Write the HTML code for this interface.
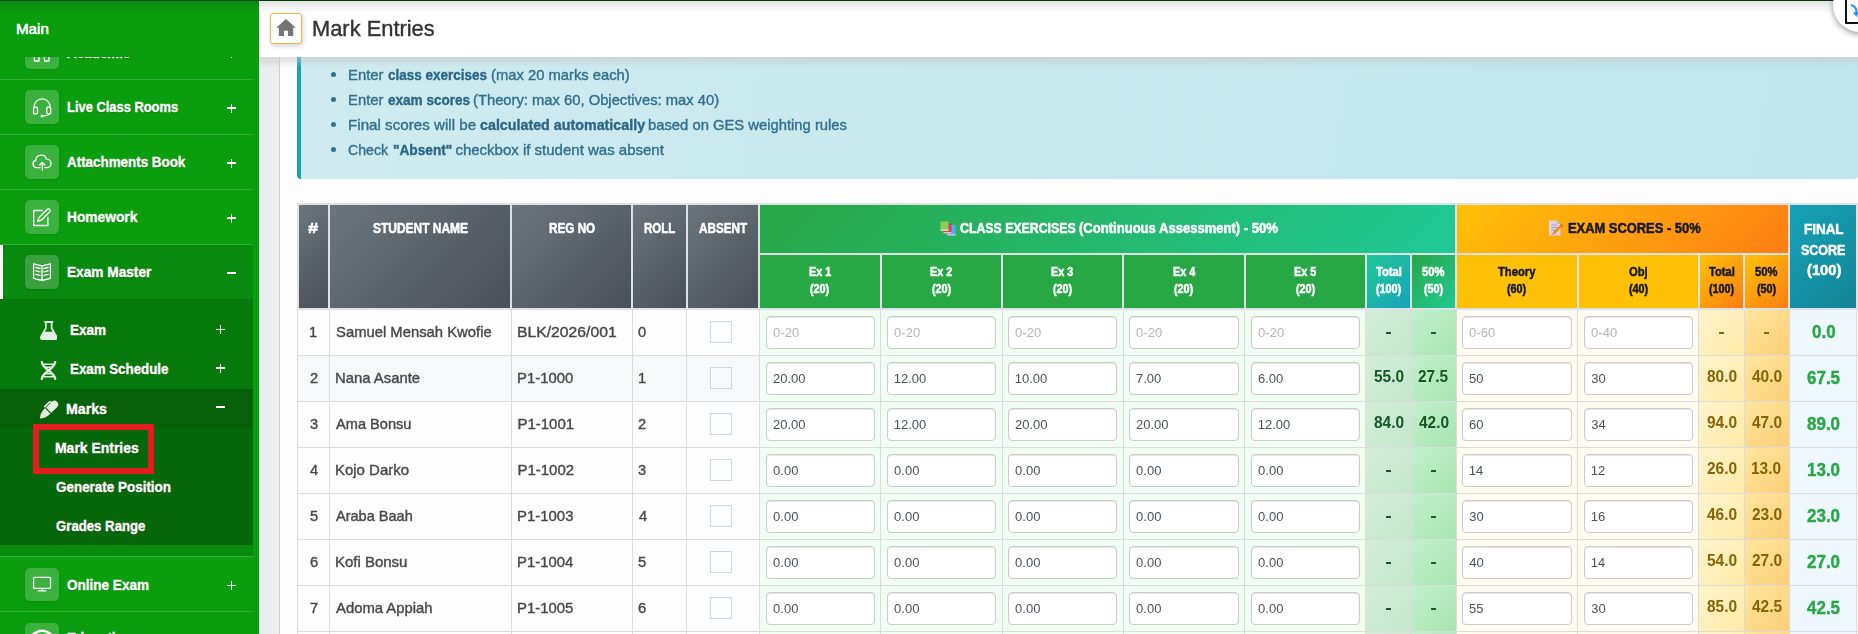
<!DOCTYPE html>
<html lang="en"><head><meta charset="utf-8"><title>Mark Entries</title><style>
*{box-sizing:border-box;margin:0;padding:0}
html,body{width:1858px;height:634px;overflow:hidden;background:#ebedf1;font-family:"Liberation Sans",sans-serif}
body{position:relative}
.abs,.t,.b{position:absolute}
.t{white-space:nowrap;line-height:1;transform-origin:0 0;-webkit-text-stroke:.38px}
.ns{-webkit-text-stroke:0}
.hd{-webkit-text-stroke:.5px}
#main{left:0;top:0;width:1858px;height:634px;overflow:hidden;will-change:transform}
#side{left:0;top:0;width:259px;height:634px;background:#0a9e0e;overflow:hidden}
#side .div{left:0;width:253px;height:1px;background:rgba(255,255,255,.17)}
.ib{left:25px;width:34px;height:34px;border-radius:5px;background:rgba(255,255,255,.2);box-shadow:0 1px 3px rgba(0,0,0,.12)}
.ib svg{position:absolute;left:0;top:0;width:34px;height:34px;fill:none;stroke:#fff;stroke-width:1.3;stroke-linecap:round;stroke-linejoin:round}
.inp{height:33px;background:#fff;border:1px solid #cbcbcb;border-radius:4px;box-shadow:inset 0 1px 1px rgba(0,0,0,.1)}
.cb{width:22px;height:22px;border:1px solid #cbd8db}
.sh{text-shadow:0 1px 1px rgba(0,0,0,.35)}
</style></head><body>
<div id="side" class="abs">
<div class="b" style="left:0;top:245px;width:253px;height:311px;background:#088a0e"></div>
<div class="b" style="left:0;top:245px;width:3px;height:54px;background:#fff"></div>
<div class="b" style="left:0;top:299px;width:253px;height:246px;background:#07790c"></div>
<div class="b" style="left:0;top:389px;width:253px;height:39px;background:#06600a"></div>
<div class="b" style="left:0;top:428px;width:253px;height:117px;background:#07670b"></div>
<div class="b div" style="top:79px"></div>
<div class="b div" style="top:134px"></div>
<div class="b div" style="top:189px"></div>
<div class="b div" style="top:244px"></div>
<div class="b div" style="top:556px"></div>
<div class="b div" style="top:611px"></div>
<div class="b ib" style="top:35px;height:34px"><svg viewBox="0 0 34 34"><rect x="9.4" y="16" width="4.6" height="10"/><rect x="19.4" y="16" width="4.6" height="10"/></svg></div>
<span class="t sh" style="left:67.3px;top:45.1px;font-size:15.5px;font-weight:700;color:#fff;transform:scaleX(0.862);">Academic</span>
<div class="b" style="left:227px;top:52.4px;width:9px;height:1.6px;background:#fff"></div>
<div class="b" style="left:230.7px;top:48.7px;width:1.6px;height:9px;background:#fff"></div>
<div class="b ib" style="top:90px;height:34px"><svg viewBox="0 0 34 34"><path d="M9.2 17.5v-.8a7.9 7.9 0 0 1 15.8 0v.8"/><rect x="8.6" y="17.2" width="3.9" height="6.6" rx="1"/><rect x="21.8" y="17.2" width="3.9" height="6.6" rx="1"/><path d="M24.3 23.9q-.6 1.9-6.5 2.1"/><circle cx="17" cy="26" r=".9" fill="#fff"/></svg></div>
<span class="t sh" style="left:66.8px;top:99.3px;font-size:15.5px;font-weight:700;color:#fff;transform:scaleX(0.832);">Live Class Rooms</span>
<div class="b" style="left:227px;top:107.4px;width:9px;height:1.6px;background:#fff"></div>
<div class="b" style="left:230.7px;top:103.7px;width:1.6px;height:9px;background:#fff"></div>
<div class="b ib" style="top:145px;height:34px"><svg viewBox="0 0 34 34"><path d="M15 22.6h-3.3a3.6 3.6 0 0 1-.9-7.1 5.4 5.4 0 0 1 10.6-1.4 4.3 4.3 0 0 1 1.2 8.5h-3"/><path d="M17.3 25v-7.3M14.7 20l2.6-2.6 2.6 2.6"/></svg></div>
<span class="t sh" style="left:67.3px;top:154.3px;font-size:15.5px;font-weight:700;color:#fff;transform:scaleX(0.864);">Attachments Book</span>
<div class="b" style="left:227px;top:162.4px;width:9px;height:1.6px;background:#fff"></div>
<div class="b" style="left:230.7px;top:158.7px;width:1.6px;height:9px;background:#fff"></div>
<div class="b ib" style="top:200px;height:34px"><svg viewBox="0 0 34 34"><path d="M17.5 10.5H8.7v15h14.2v-8"/><path d="M12.8 21.3l1-3.5 8.5-8.5a1.7 1.7 0 0 1 2.4 2.4l-8.5 8.5z"/></svg></div>
<span class="t sh" style="left:66.7px;top:209.3px;font-size:15.5px;font-weight:700;color:#fff;transform:scaleX(0.888);">Homework</span>
<div class="b" style="left:227px;top:217.4px;width:9px;height:1.6px;background:#fff"></div>
<div class="b" style="left:230.7px;top:213.7px;width:1.6px;height:9px;background:#fff"></div>
<div class="b ib" style="top:255px;height:34px"><svg viewBox="0 0 34 34"><path d="M8.6 8.9l8.4 2 8.4-2v14.4l-8.4 2.2-8.4-2.2zM17 10.9v14.6"/><path d="M10.9 12.5l4.1 1M10.9 15.9l4.1 1M10.9 19.3l4.1 1M23.1 12.5l-4.1 1M23.1 15.9l-4.1 1M23.1 19.3l-4.1 1"/></svg></div>
<span class="t sh" style="left:66.7px;top:264.3px;font-size:15.5px;font-weight:700;color:#fff;transform:scaleX(0.882);">Exam Master</span>
<div class="b" style="left:227px;top:272.4px;width:9px;height:1.6px;background:#fff"></div>
<div class="b ib" style="top:567.5px;height:33px"><svg viewBox="0 0 34 34"><rect x="8.6" y="9.3" width="16.9" height="11" rx="1"/><path d="M17 20.3v2.3M13.2 22.8h7.6"/></svg></div>
<span class="t sh" style="left:67.1px;top:577.3px;font-size:15.5px;font-weight:700;color:#fff;transform:scaleX(0.873);">Online Exam</span>
<div class="b" style="left:227px;top:584.9px;width:9px;height:1.6px;background:#fff"></div>
<div class="b" style="left:230.7px;top:581.2px;width:1.6px;height:9px;background:#fff"></div>
<div class="b ib" style="top:623px;height:34px"><svg viewBox="0 0 34 34"><path d="M7.5 12Q17 3.5 26.5 12" stroke-width="2.6"/></svg></div>
<span class="t sh" style="left:66.7px;top:630.3px;font-size:15.5px;font-weight:700;color:#fff;transform:scaleX(0.868);">Education</span>
<svg class="b" style="left:39.5px;top:321px;width:17.5px;height:18.5px" viewBox="0 0 17 18"><rect x="4" y="0" width="9" height="1.9" rx=".6" fill="#e2efe2" stroke="none"/><path d="M5.7 1.8V7L1 15.2a1.7 1.7 0 0 0 1.5 2.6h12a1.7 1.7 0 0 0 1.5-2.6L11.3 7V1.8" fill="none" stroke="#e2efe2" stroke-width="1.7"/><path d="M3.8 10.5h9.4l2.6 5.2a1.2 1.2 0 0 1-1.1 1.7H2.3a1.2 1.2 0 0 1-1.1-1.7z" fill="#e2efe2" stroke="none"/></svg>
<svg class="b" style="left:39.8px;top:360.6px;width:17px;height:19px" viewBox="0 0 17 19"><g fill="none" stroke="#e2efe2" stroke-width="2.3" stroke-linecap="round"><path d="M1.8 1C1.8 7.5 15.2 11.5 15.2 18"/><path d="M15.2 1C15.2 7.5 1.8 11.5 1.8 18"/></g><g stroke="#e2efe2" stroke-width="1.4"><path d="M3 3.2h11M5.5 6.2h6M5.5 12.8h6M3 15.8h11"/></g></svg>
<svg class="b" style="left:38.5px;top:400px;width:20px;height:19px" viewBox="0 0 20 19"><path d="M12.9 1.8A3.75 3.75 0 0 1 18.1 7.2L9.6 15.2Q5 18.5 1.3 18.5Q.8 18.5.9 18Q1.2 13.5 4.4 9.8Z" fill="#e2efe2" stroke="none"/><path d="M6.6 7.9l5.2 5.5" stroke="#06600a" stroke-width="1.2"/><path d="M5.6 6.6l4.7-4.5a1.3 1.3 0 0 1 1.8 0" fill="none" stroke="#e2efe2" stroke-width="1.5" stroke-linecap="round"/></svg>
<span class="t sh" style="left:69.9px;top:322.2px;font-size:15.5px;font-weight:700;color:#fff;transform:scaleX(0.874);">Exam</span>
<div class="b" style="left:215.8px;top:328.6px;width:9px;height:1.6px;background:#fff"></div>
<div class="b" style="left:219.5px;top:324.9px;width:1.6px;height:9px;background:#fff"></div>
<span class="t sh" style="left:69.9px;top:361.2px;font-size:15.5px;font-weight:700;color:#fff;transform:scaleX(0.859);">Exam Schedule</span>
<div class="b" style="left:215.8px;top:367.4px;width:9px;height:1.6px;background:#fff"></div>
<div class="b" style="left:219.5px;top:363.7px;width:1.6px;height:9px;background:#fff"></div>
<span class="t sh" style="left:66.4px;top:400.5px;font-size:15.5px;font-weight:700;color:#fff;transform:scaleX(0.912);">Marks</span>
<div class="b" style="left:215.8px;top:406.2px;width:9px;height:1.6px;background:#fff"></div>
<span class="t sh" style="left:55.4px;top:440.2px;font-size:15.5px;font-weight:700;color:#fff;transform:scaleX(0.900);">Mark Entries</span>
<span class="t sh" style="left:55.8px;top:479.2px;font-size:15.5px;font-weight:700;color:#fff;transform:scaleX(0.867);">Generate Position</span>
<span class="t sh" style="left:55.8px;top:518.2px;font-size:15.5px;font-weight:700;color:#fff;transform:scaleX(0.851);">Grades Range</span>
<div class="b" style="left:33px;top:424px;width:121px;height:50px;border:6px solid #e31c1f"></div>
<div class="b" style="left:0;top:0;width:259px;height:57px;background:linear-gradient(#0a8b11 0,#0a8b11 1px,#0a9e0e 14px)"></div>
<span class="t" style="left:16.2px;top:21.9px;font-size:14.5px;color:#fff;transform:scaleX(1.044);text-shadow:0 0 .5px #fff;">Main</span>
</div>
<div id="main" class="abs">
<div class="abs" style="left:279px;top:57px;width:1600px;height:600px;background:#fdfdfd;border-left:1px solid #cfd0d3"></div>
<div class="abs" style="left:297px;top:40px;width:1561px;height:139px;background:linear-gradient(100deg,#cfebf0,#bfe5eb);border-left:4px solid #17a2b8;border-radius:4px"></div>
<div class="b" style="left:331px;top:71.9px;width:5px;height:5px;border-radius:50%;background:#31708f"></div>
<div class="b" style="left:331px;top:96.8px;width:5px;height:5px;border-radius:50%;background:#31708f"></div>
<div class="b" style="left:331px;top:121.8px;width:5px;height:5px;border-radius:50%;background:#31708f"></div>
<div class="b" style="left:331px;top:146.8px;width:5px;height:5px;border-radius:50%;background:#31708f"></div>
<span class="t" style="left:348.0px;top:66.9px;font-size:15px;color:#31708f;transform:scaleX(0.988);">Enter</span>
<span class="t" style="left:388.0px;top:66.9px;font-size:15px;font-weight:700;color:#2b6788;transform:scaleX(0.900);">class exercises</span>
<span class="t" style="left:490.6px;top:66.9px;font-size:15px;color:#31708f;transform:scaleX(0.985);">(max 20 marks each)</span>
<span class="t" style="left:348.0px;top:91.8px;font-size:15px;color:#31708f;transform:scaleX(0.988);">Enter</span>
<span class="t" style="left:388.0px;top:91.8px;font-size:15px;font-weight:700;color:#2b6788;transform:scaleX(0.903);">exam scores</span>
<span class="t" style="left:473.3px;top:91.8px;font-size:15px;color:#31708f;transform:scaleX(0.984);">(Theory: max 60, Objectives: max 40)</span>
<span class="t" style="left:348.0px;top:116.8px;font-size:15px;color:#31708f;transform:scaleX(1.011);">Final scores will be</span>
<span class="t" style="left:479.5px;top:116.8px;font-size:15px;font-weight:700;color:#2b6788;transform:scaleX(0.952);">calculated automatically</span>
<span class="t" style="left:648.1px;top:116.8px;font-size:15px;color:#31708f;transform:scaleX(0.986);">based on GES weighting rules</span>
<span class="t" style="left:348.3px;top:141.8px;font-size:15px;color:#31708f;transform:scaleX(0.944);">Check</span>
<span class="t" style="left:392.7px;top:141.8px;font-size:15px;font-weight:700;color:#2b6788;transform:scaleX(0.912);">"Absent"</span>
<span class="t" style="left:455.4px;top:141.8px;font-size:15px;color:#31708f;">checkbox if student was absent</span>
<div class="abs" style="left:297px;top:203px;width:1561px;height:431px;background:#fdfdfd"></div>
<div class="abs" style="left:297px;top:203px;width:1561px;height:107px;background:#dee2e6"></div>
<div class="b" style="left:299px;top:205px;width:29px;height:103px;background:linear-gradient(135deg,#6c757d,#495057)"></div>
<div class="b" style="left:330px;top:205px;width:180px;height:103px;background:linear-gradient(135deg,#6c757d,#495057)"></div>
<div class="b" style="left:512px;top:205px;width:119px;height:103px;background:linear-gradient(135deg,#6c757d,#495057)"></div>
<div class="b" style="left:633px;top:205px;width:53px;height:103px;background:linear-gradient(135deg,#6c757d,#495057)"></div>
<div class="b" style="left:688px;top:205px;width:70px;height:103px;background:linear-gradient(135deg,#6c757d,#495057)"></div>
<div class="b" style="left:760px;top:205px;width:695px;height:48px;background:linear-gradient(135deg,#28a745,#20c997)"></div>
<div class="b" style="left:760px;top:255px;width:120px;height:53px;background:#28a745"></div>
<div class="b" style="left:882px;top:255px;width:119px;height:53px;background:#28a745"></div>
<div class="b" style="left:1003px;top:255px;width:119px;height:53px;background:#28a745"></div>
<div class="b" style="left:1124px;top:255px;width:120px;height:53px;background:#28a745"></div>
<div class="b" style="left:1246px;top:255px;width:119px;height:53px;background:#28a745"></div>
<div class="b" style="left:1367px;top:255px;width:43px;height:53px;background:linear-gradient(135deg,#20c997,#17a2b8)"></div>
<div class="b" style="left:1412px;top:255px;width:43px;height:53px;background:linear-gradient(135deg,#28a745,#20c997)"></div>
<div class="b" style="left:1457px;top:205px;width:331px;height:48px;background:linear-gradient(135deg,#ffc107,#fd7e14)"></div>
<div class="b" style="left:1457px;top:255px;width:120px;height:53px;background:#ffc107"></div>
<div class="b" style="left:1579px;top:255px;width:119px;height:53px;background:#ffc107"></div>
<div class="b" style="left:1700px;top:255px;width:43px;height:53px;background:linear-gradient(135deg,#ffc107,#fd7e14)"></div>
<div class="b" style="left:1745px;top:255px;width:43px;height:53px;background:linear-gradient(135deg,#ffc107,#fd7e14)"></div>
<div class="b" style="left:1790px;top:205px;width:66px;height:103px;background:linear-gradient(135deg,#17a2b8,#138496)"></div>
<span class="t hd" style="left:308.4px;top:220.9px;font-size:14.5px;font-weight:700;color:#fff;transform:scaleX(1.262);">#</span>
<span class="t hd" style="left:372.8px;top:220.9px;font-size:14.5px;font-weight:700;color:#fff;transform:scaleX(0.825);">STUDENT NAME</span>
<span class="t hd" style="left:548.7px;top:220.9px;font-size:14.5px;font-weight:700;color:#fff;transform:scaleX(0.808);">REG NO</span>
<span class="t hd" style="left:643.6px;top:220.9px;font-size:14.5px;font-weight:700;color:#fff;transform:scaleX(0.795);">ROLL</span>
<span class="t hd" style="left:698.9px;top:220.9px;font-size:14.5px;font-weight:700;color:#fff;transform:scaleX(0.809);">ABSENT</span>
<span class="t hd" style="left:960.1px;top:220.0px;font-size:15px;font-weight:700;color:#fff;transform:scaleX(0.821);">CLASS EXERCISES</span>
<span class="t hd" style="left:1079.2px;top:220.0px;font-size:15px;font-weight:700;color:#fff;transform:scaleX(0.870);">(Continuous Assessment) - 50%</span>
<span class="t hd" style="left:1567.9px;top:219.9px;font-size:15px;font-weight:700;color:#15181b;transform:scaleX(0.860);">EXAM SCORES - 50%</span>
<span class="t hd" style="left:1803.5px;top:220.6px;font-size:15px;font-weight:700;color:#fff;transform:scaleX(0.896);">FINAL</span>
<span class="t hd" style="left:1801.2px;top:241.6px;font-size:15px;font-weight:700;color:#fff;transform:scaleX(0.830);">SCORE</span>
<span class="t hd" style="left:1806.6px;top:262.4px;font-size:15px;font-weight:700;color:#fff;transform:scaleX(0.980);">(100)</span>
<svg class="b" style="left:940px;top:221px;width:16px;height:15px" viewBox="0 0 16 15"><rect x="7" y="4" width="8.5" height="10.5" rx=".8" fill="#5aa9f0"/><rect x="7" y="13" width="8.5" height="1.5" fill="#b9c8e8"/><rect x="3.5" y="2.5" width="8" height="10" rx=".8" fill="#e23a5e"/><rect x="3.5" y="11" width="8" height="1.5" fill="#e9c2d0"/><rect x=".5" y=".5" width="8" height="9.5" rx=".8" fill="#8ccf54"/><rect x=".5" y="8.5" width="8" height="1.5" fill="#cfe3b8"/></svg>
<svg class="b" style="left:1548px;top:220px;width:15px;height:16px" viewBox="0 0 15 16"><path d="M1 .5h8l3.5 3.5v11.5H1z" fill="#d9d3e4"/><path d="M9 .5v3.5h3.5z" fill="#b9b2c8"/><path d="M3 5h6M3 7.5h7M3 10h4" stroke="#a9a2b8" stroke-width="1"/><path d="M4.5 14.5l1-3 6.5-6.5 2 2-6.5 6.5z" fill="#f58a2c"/><path d="M12 5l1-1 2 2-1 1z" fill="#e84c3d"/><path d="M4.5 14.5l.4-1.3.9.9z" fill="#444"/></svg>
<span class="t hd" style="left:808.7px;top:265.0px;font-size:13.5px;font-weight:700;color:#fff;transform:scaleX(0.800);">Ex 1</span>
<span class="t hd" style="left:810.4px;top:283.4px;font-size:12px;font-weight:700;color:#fff;transform:scaleX(0.900);">(20)</span>
<span class="t hd" style="left:930.2px;top:265.0px;font-size:13.5px;font-weight:700;color:#fff;transform:scaleX(0.800);">Ex 2</span>
<span class="t hd" style="left:931.9px;top:283.4px;font-size:12px;font-weight:700;color:#fff;transform:scaleX(0.900);">(20)</span>
<span class="t hd" style="left:1051.2px;top:265.0px;font-size:13.5px;font-weight:700;color:#fff;transform:scaleX(0.800);">Ex 3</span>
<span class="t hd" style="left:1052.9px;top:283.4px;font-size:12px;font-weight:700;color:#fff;transform:scaleX(0.900);">(20)</span>
<span class="t hd" style="left:1172.6px;top:265.0px;font-size:13.5px;font-weight:700;color:#fff;transform:scaleX(0.800);">Ex 4</span>
<span class="t hd" style="left:1174.4px;top:283.4px;font-size:12px;font-weight:700;color:#fff;transform:scaleX(0.900);">(20)</span>
<span class="t hd" style="left:1294.2px;top:265.0px;font-size:13.5px;font-weight:700;color:#fff;transform:scaleX(0.800);">Ex 5</span>
<span class="t hd" style="left:1295.9px;top:283.4px;font-size:12px;font-weight:700;color:#fff;transform:scaleX(0.900);">(20)</span>
<span class="t hd" style="left:1375.9px;top:265.0px;font-size:13.5px;font-weight:700;color:#fff;transform:scaleX(0.830);">Total</span>
<span class="t hd" style="left:1375.9px;top:283.4px;font-size:12px;font-weight:700;color:#fff;transform:scaleX(0.900);">(100)</span>
<span class="t hd" style="left:1422.3px;top:265.0px;font-size:13.5px;font-weight:700;color:#fff;transform:scaleX(0.830);">50%</span>
<span class="t hd" style="left:1423.9px;top:283.4px;font-size:12px;font-weight:700;color:#fff;transform:scaleX(0.900);">(50)</span>
<span class="t hd" style="left:1498.3px;top:265.0px;font-size:13.5px;font-weight:700;color:#15181b;transform:scaleX(0.830);">Theory</span>
<span class="t hd" style="left:1507.4px;top:283.4px;font-size:12px;font-weight:700;color:#15181b;transform:scaleX(0.900);">(60)</span>
<span class="t hd" style="left:1629.3px;top:265.0px;font-size:13.5px;font-weight:700;color:#15181b;transform:scaleX(0.830);">Obj</span>
<span class="t hd" style="left:1628.9px;top:283.4px;font-size:12px;font-weight:700;color:#15181b;transform:scaleX(0.900);">(40)</span>
<span class="t hd" style="left:1708.9px;top:265.0px;font-size:13.5px;font-weight:700;color:#15181b;transform:scaleX(0.830);">Total</span>
<span class="t hd" style="left:1708.9px;top:283.4px;font-size:12px;font-weight:700;color:#15181b;transform:scaleX(0.900);">(100)</span>
<span class="t hd" style="left:1755.3px;top:265.0px;font-size:13.5px;font-weight:700;color:#15181b;transform:scaleX(0.830);">50%</span>
<span class="t hd" style="left:1756.9px;top:283.4px;font-size:12px;font-weight:700;color:#15181b;transform:scaleX(0.900);">(50)</span>
<div class="b" style="left:760px;top:310px;width:605px;height:45px;background:#f0fdf3"></div>
<div class="b" style="left:1366px;top:310px;width:45px;height:45px;background:linear-gradient(135deg,#d4edda,#c3e6cb)"></div>
<div class="b" style="left:1412px;top:310px;width:44px;height:45px;background:linear-gradient(135deg,#c3efcb,#a7e5b2)"></div>
<div class="b" style="left:1457px;top:310px;width:241px;height:45px;background:#fffbf0"></div>
<div class="b" style="left:1699px;top:310px;width:45px;height:45px;background:linear-gradient(135deg,#fff3cd,#ffeaa7)"></div>
<div class="b" style="left:1745px;top:310px;width:44px;height:45px;background:linear-gradient(135deg,#ffe6a0,#fdce75)"></div>
<div class="b" style="left:1790px;top:310px;width:66px;height:45px;background:#f0f8ff"></div>
<div class="b" style="left:297px;top:355px;width:1561px;height:1px;background:#dcdcdc"></div>
<span class="t" style="left:309.4px;top:324.3px;font-size:15px;color:#474747;transform:scaleX(0.980);">1</span>
<span class="t" style="left:335.5px;top:324.3px;font-size:15px;color:#474747;transform:scaleX(0.988);">Samuel Mensah Kwofie</span>
<span class="t" style="left:517.4px;top:324.3px;font-size:15px;color:#474747;transform:scaleX(1.049);">BLK/2026/001</span>
<span class="t" style="left:638.4px;top:324.3px;font-size:15px;color:#474747;transform:scaleX(0.980);">0</span>
<div class="b cb" style="left:710px;top:321px"></div>
<div class="b inp" style="left:766px;top:316px;width:109px"></div>
<span class="t ns" style="left:773.1px;top:325.8px;font-size:13px;color:#b4b4b4;">0-20</span>
<div class="b inp" style="left:887px;top:316px;width:109px"></div>
<span class="t ns" style="left:894.1px;top:325.8px;font-size:13px;color:#b4b4b4;">0-20</span>
<div class="b inp" style="left:1008px;top:316px;width:109px"></div>
<span class="t ns" style="left:1015.1px;top:325.8px;font-size:13px;color:#b4b4b4;">0-20</span>
<div class="b inp" style="left:1129px;top:316px;width:110px"></div>
<span class="t ns" style="left:1136.1px;top:325.8px;font-size:13px;color:#b4b4b4;">0-20</span>
<div class="b inp" style="left:1251px;top:316px;width:109px"></div>
<span class="t ns" style="left:1258.1px;top:325.8px;font-size:13px;color:#b4b4b4;">0-20</span>
<div class="b inp" style="left:1462px;top:316px;width:110px"></div>
<span class="t ns" style="left:1469.1px;top:325.8px;font-size:13px;color:#b4b4b4;">0-60</span>
<div class="b inp" style="left:1584px;top:316px;width:109px"></div>
<span class="t ns" style="left:1591.1px;top:325.8px;font-size:13px;color:#b4b4b4;">0-40</span>
<div class="b" style="left:1386px;top:331.8px;width:5px;height:2px;border-radius:.5px;background:#155724"></div>
<div class="b" style="left:1431px;top:331.8px;width:5px;height:2px;border-radius:.5px;background:#155724"></div>
<div class="b" style="left:1719px;top:331.8px;width:5px;height:2px;border-radius:.5px;background:#856404"></div>
<div class="b" style="left:1764px;top:331.8px;width:5px;height:2px;border-radius:.5px;background:#856404"></div>
<span class="t" style="left:1811.8px;top:323.5px;font-size:17.5px;font-weight:700;color:#28a745;transform:scaleX(0.970);">0.0</span>
<div class="b" style="left:298px;top:356px;width:461px;height:45px;background:#f7f8fa"></div>
<div class="b" style="left:760px;top:356px;width:605px;height:45px;background:#f0fdf3"></div>
<div class="b" style="left:1366px;top:356px;width:45px;height:45px;background:linear-gradient(135deg,#d4edda,#c3e6cb)"></div>
<div class="b" style="left:1412px;top:356px;width:44px;height:45px;background:linear-gradient(135deg,#c3efcb,#a7e5b2)"></div>
<div class="b" style="left:1457px;top:356px;width:241px;height:45px;background:#fffbf0"></div>
<div class="b" style="left:1699px;top:356px;width:45px;height:45px;background:linear-gradient(135deg,#fff3cd,#ffeaa7)"></div>
<div class="b" style="left:1745px;top:356px;width:44px;height:45px;background:linear-gradient(135deg,#ffe6a0,#fdce75)"></div>
<div class="b" style="left:1790px;top:356px;width:66px;height:45px;background:#f0f8ff"></div>
<div class="b" style="left:297px;top:401px;width:1561px;height:1px;background:#dcdcdc"></div>
<span class="t" style="left:309.6px;top:370.3px;font-size:15px;color:#474747;transform:scaleX(0.980);">2</span>
<span class="t" style="left:334.9px;top:370.3px;font-size:15px;color:#474747;transform:scaleX(0.990);">Nana Asante</span>
<span class="t" style="left:517.4px;top:370.3px;font-size:15px;color:#474747;transform:scaleX(0.993);">P1-1000</span>
<span class="t" style="left:637.9px;top:370.3px;font-size:15px;color:#474747;transform:scaleX(0.980);">1</span>
<div class="b cb" style="left:710px;top:367px"></div>
<div class="b inp" style="left:766px;top:362px;width:109px"></div>
<span class="t ns" style="left:773.0px;top:371.8px;font-size:13px;color:#4b5157;">20.00</span>
<div class="b inp" style="left:887px;top:362px;width:109px"></div>
<span class="t ns" style="left:893.7px;top:371.8px;font-size:13px;color:#4b5157;">12.00</span>
<div class="b inp" style="left:1008px;top:362px;width:109px"></div>
<span class="t ns" style="left:1014.7px;top:371.8px;font-size:13px;color:#4b5157;">10.00</span>
<div class="b inp" style="left:1129px;top:362px;width:110px"></div>
<span class="t ns" style="left:1136.0px;top:371.8px;font-size:13px;color:#4b5157;">7.00</span>
<div class="b inp" style="left:1251px;top:362px;width:109px"></div>
<span class="t ns" style="left:1258.0px;top:371.8px;font-size:13px;color:#4b5157;">6.00</span>
<div class="b inp" style="left:1462px;top:362px;width:110px"></div>
<span class="t ns" style="left:1469.1px;top:371.8px;font-size:13px;color:#4b5157;">50</span>
<div class="b inp" style="left:1584px;top:362px;width:109px"></div>
<span class="t ns" style="left:1591.2px;top:371.8px;font-size:13px;color:#4b5157;">30</span>
<span class="t ns" style="left:1373.6px;top:369.2px;font-size:16px;font-weight:700;color:#155724;transform:scaleX(0.965);">55.0</span>
<span class="t ns" style="left:1418.4px;top:369.2px;font-size:16px;font-weight:700;color:#155724;transform:scaleX(0.965);">27.5</span>
<span class="t ns" style="left:1706.5px;top:369.2px;font-size:16px;font-weight:700;color:#856404;transform:scaleX(0.965);">80.0</span>
<span class="t ns" style="left:1751.7px;top:369.2px;font-size:16px;font-weight:700;color:#856404;transform:scaleX(0.965);">40.0</span>
<span class="t" style="left:1806.9px;top:369.5px;font-size:17.5px;font-weight:700;color:#28a745;transform:scaleX(0.970);">67.5</span>
<div class="b" style="left:760px;top:402px;width:605px;height:45px;background:#f0fdf3"></div>
<div class="b" style="left:1366px;top:402px;width:45px;height:45px;background:linear-gradient(135deg,#d4edda,#c3e6cb)"></div>
<div class="b" style="left:1412px;top:402px;width:44px;height:45px;background:linear-gradient(135deg,#c3efcb,#a7e5b2)"></div>
<div class="b" style="left:1457px;top:402px;width:241px;height:45px;background:#fffbf0"></div>
<div class="b" style="left:1699px;top:402px;width:45px;height:45px;background:linear-gradient(135deg,#fff3cd,#ffeaa7)"></div>
<div class="b" style="left:1745px;top:402px;width:44px;height:45px;background:linear-gradient(135deg,#ffe6a0,#fdce75)"></div>
<div class="b" style="left:1790px;top:402px;width:66px;height:45px;background:#f0f8ff"></div>
<div class="b" style="left:297px;top:447px;width:1561px;height:1px;background:#dcdcdc"></div>
<span class="t" style="left:309.7px;top:416.3px;font-size:15px;color:#474747;transform:scaleX(0.980);">3</span>
<span class="t" style="left:336.1px;top:416.3px;font-size:15px;color:#474747;transform:scaleX(0.973);">Ama Bonsu</span>
<span class="t" style="left:517.4px;top:416.3px;font-size:15px;color:#474747;">P1-1001</span>
<span class="t" style="left:638.3px;top:416.3px;font-size:15px;color:#474747;transform:scaleX(0.980);">2</span>
<div class="b cb" style="left:710px;top:413px"></div>
<div class="b inp" style="left:766px;top:408px;width:109px"></div>
<span class="t ns" style="left:773.0px;top:417.8px;font-size:13px;color:#4b5157;">20.00</span>
<div class="b inp" style="left:887px;top:408px;width:109px"></div>
<span class="t ns" style="left:893.7px;top:417.8px;font-size:13px;color:#4b5157;">12.00</span>
<div class="b inp" style="left:1008px;top:408px;width:109px"></div>
<span class="t ns" style="left:1015.0px;top:417.8px;font-size:13px;color:#4b5157;">20.00</span>
<div class="b inp" style="left:1129px;top:408px;width:110px"></div>
<span class="t ns" style="left:1136.0px;top:417.8px;font-size:13px;color:#4b5157;">20.00</span>
<div class="b inp" style="left:1251px;top:408px;width:109px"></div>
<span class="t ns" style="left:1257.7px;top:417.8px;font-size:13px;color:#4b5157;">12.00</span>
<div class="b inp" style="left:1462px;top:408px;width:110px"></div>
<span class="t ns" style="left:1469.0px;top:417.8px;font-size:13px;color:#4b5157;">60</span>
<div class="b inp" style="left:1584px;top:408px;width:109px"></div>
<span class="t ns" style="left:1591.2px;top:417.8px;font-size:13px;color:#4b5157;">34</span>
<span class="t ns" style="left:1373.5px;top:415.2px;font-size:16px;font-weight:700;color:#155724;transform:scaleX(0.965);">84.0</span>
<span class="t ns" style="left:1418.7px;top:415.2px;font-size:16px;font-weight:700;color:#155724;transform:scaleX(0.965);">42.0</span>
<span class="t ns" style="left:1706.5px;top:415.2px;font-size:16px;font-weight:700;color:#856404;transform:scaleX(0.965);">94.0</span>
<span class="t ns" style="left:1751.7px;top:415.2px;font-size:16px;font-weight:700;color:#856404;transform:scaleX(0.965);">47.0</span>
<span class="t" style="left:1807.1px;top:415.5px;font-size:17.5px;font-weight:700;color:#28a745;transform:scaleX(0.970);">89.0</span>
<div class="b" style="left:760px;top:448px;width:605px;height:45px;background:#f0fdf3"></div>
<div class="b" style="left:1366px;top:448px;width:45px;height:45px;background:linear-gradient(135deg,#d4edda,#c3e6cb)"></div>
<div class="b" style="left:1412px;top:448px;width:44px;height:45px;background:linear-gradient(135deg,#c3efcb,#a7e5b2)"></div>
<div class="b" style="left:1457px;top:448px;width:241px;height:45px;background:#fffbf0"></div>
<div class="b" style="left:1699px;top:448px;width:45px;height:45px;background:linear-gradient(135deg,#fff3cd,#ffeaa7)"></div>
<div class="b" style="left:1745px;top:448px;width:44px;height:45px;background:linear-gradient(135deg,#ffe6a0,#fdce75)"></div>
<div class="b" style="left:1790px;top:448px;width:66px;height:45px;background:#f0f8ff"></div>
<div class="b" style="left:297px;top:493px;width:1561px;height:1px;background:#dcdcdc"></div>
<span class="t" style="left:309.7px;top:462.3px;font-size:15px;color:#474747;transform:scaleX(0.980);">4</span>
<span class="t" style="left:334.9px;top:462.3px;font-size:15px;color:#474747;">Kojo Darko</span>
<span class="t" style="left:517.4px;top:462.3px;font-size:15px;color:#474747;">P1-1002</span>
<span class="t" style="left:638.4px;top:462.3px;font-size:15px;color:#474747;transform:scaleX(0.980);">3</span>
<div class="b cb" style="left:710px;top:459px"></div>
<div class="b inp" style="left:766px;top:454px;width:109px"></div>
<span class="t ns" style="left:773.1px;top:463.8px;font-size:13px;color:#4b5157;">0.00</span>
<div class="b inp" style="left:887px;top:454px;width:109px"></div>
<span class="t ns" style="left:894.1px;top:463.8px;font-size:13px;color:#4b5157;">0.00</span>
<div class="b inp" style="left:1008px;top:454px;width:109px"></div>
<span class="t ns" style="left:1015.1px;top:463.8px;font-size:13px;color:#4b5157;">0.00</span>
<div class="b inp" style="left:1129px;top:454px;width:110px"></div>
<span class="t ns" style="left:1136.1px;top:463.8px;font-size:13px;color:#4b5157;">0.00</span>
<div class="b inp" style="left:1251px;top:454px;width:109px"></div>
<span class="t ns" style="left:1258.1px;top:463.8px;font-size:13px;color:#4b5157;">0.00</span>
<div class="b inp" style="left:1462px;top:454px;width:110px"></div>
<span class="t ns" style="left:1468.7px;top:463.8px;font-size:13px;color:#4b5157;">14</span>
<div class="b inp" style="left:1584px;top:454px;width:109px"></div>
<span class="t ns" style="left:1590.7px;top:463.8px;font-size:13px;color:#4b5157;">12</span>
<div class="b" style="left:1386px;top:469.8px;width:5px;height:2px;border-radius:.5px;background:#155724"></div>
<div class="b" style="left:1431px;top:469.8px;width:5px;height:2px;border-radius:.5px;background:#155724"></div>
<span class="t ns" style="left:1706.5px;top:461.2px;font-size:16px;font-weight:700;color:#856404;transform:scaleX(0.965);">26.0</span>
<span class="t ns" style="left:1751.3px;top:461.2px;font-size:16px;font-weight:700;color:#856404;transform:scaleX(0.965);">13.0</span>
<span class="t" style="left:1806.8px;top:461.5px;font-size:17.5px;font-weight:700;color:#28a745;transform:scaleX(0.970);">13.0</span>
<div class="b" style="left:760px;top:494px;width:605px;height:45px;background:#f0fdf3"></div>
<div class="b" style="left:1366px;top:494px;width:45px;height:45px;background:linear-gradient(135deg,#d4edda,#c3e6cb)"></div>
<div class="b" style="left:1412px;top:494px;width:44px;height:45px;background:linear-gradient(135deg,#c3efcb,#a7e5b2)"></div>
<div class="b" style="left:1457px;top:494px;width:241px;height:45px;background:#fffbf0"></div>
<div class="b" style="left:1699px;top:494px;width:45px;height:45px;background:linear-gradient(135deg,#fff3cd,#ffeaa7)"></div>
<div class="b" style="left:1745px;top:494px;width:44px;height:45px;background:linear-gradient(135deg,#ffe6a0,#fdce75)"></div>
<div class="b" style="left:1790px;top:494px;width:66px;height:45px;background:#f0f8ff"></div>
<div class="b" style="left:297px;top:539px;width:1561px;height:1px;background:#dcdcdc"></div>
<span class="t" style="left:309.6px;top:508.3px;font-size:15px;color:#474747;transform:scaleX(0.980);">5</span>
<span class="t" style="left:336.1px;top:508.3px;font-size:15px;color:#474747;transform:scaleX(0.969);">Araba Baah</span>
<span class="t" style="left:517.4px;top:508.3px;font-size:15px;color:#474747;transform:scaleX(0.995);">P1-1003</span>
<span class="t" style="left:638.7px;top:508.3px;font-size:15px;color:#474747;transform:scaleX(0.980);">4</span>
<div class="b cb" style="left:710px;top:505px"></div>
<div class="b inp" style="left:766px;top:500px;width:109px"></div>
<span class="t ns" style="left:773.1px;top:509.8px;font-size:13px;color:#4b5157;">0.00</span>
<div class="b inp" style="left:887px;top:500px;width:109px"></div>
<span class="t ns" style="left:894.1px;top:509.8px;font-size:13px;color:#4b5157;">0.00</span>
<div class="b inp" style="left:1008px;top:500px;width:109px"></div>
<span class="t ns" style="left:1015.1px;top:509.8px;font-size:13px;color:#4b5157;">0.00</span>
<div class="b inp" style="left:1129px;top:500px;width:110px"></div>
<span class="t ns" style="left:1136.1px;top:509.8px;font-size:13px;color:#4b5157;">0.00</span>
<div class="b inp" style="left:1251px;top:500px;width:109px"></div>
<span class="t ns" style="left:1258.1px;top:509.8px;font-size:13px;color:#4b5157;">0.00</span>
<div class="b inp" style="left:1462px;top:500px;width:110px"></div>
<span class="t ns" style="left:1469.2px;top:509.8px;font-size:13px;color:#4b5157;">30</span>
<div class="b inp" style="left:1584px;top:500px;width:109px"></div>
<span class="t ns" style="left:1590.7px;top:509.8px;font-size:13px;color:#4b5157;">16</span>
<div class="b" style="left:1386px;top:515.8px;width:5px;height:2px;border-radius:.5px;background:#155724"></div>
<div class="b" style="left:1431px;top:515.8px;width:5px;height:2px;border-radius:.5px;background:#155724"></div>
<span class="t ns" style="left:1706.7px;top:507.2px;font-size:16px;font-weight:700;color:#856404;transform:scaleX(0.965);">46.0</span>
<span class="t ns" style="left:1751.5px;top:507.2px;font-size:16px;font-weight:700;color:#856404;transform:scaleX(0.965);">23.0</span>
<span class="t" style="left:1807.1px;top:507.5px;font-size:17.5px;font-weight:700;color:#28a745;transform:scaleX(0.970);">23.0</span>
<div class="b" style="left:760px;top:540px;width:605px;height:45px;background:#f0fdf3"></div>
<div class="b" style="left:1366px;top:540px;width:45px;height:45px;background:linear-gradient(135deg,#d4edda,#c3e6cb)"></div>
<div class="b" style="left:1412px;top:540px;width:44px;height:45px;background:linear-gradient(135deg,#c3efcb,#a7e5b2)"></div>
<div class="b" style="left:1457px;top:540px;width:241px;height:45px;background:#fffbf0"></div>
<div class="b" style="left:1699px;top:540px;width:45px;height:45px;background:linear-gradient(135deg,#fff3cd,#ffeaa7)"></div>
<div class="b" style="left:1745px;top:540px;width:44px;height:45px;background:linear-gradient(135deg,#ffe6a0,#fdce75)"></div>
<div class="b" style="left:1790px;top:540px;width:66px;height:45px;background:#f0f8ff"></div>
<div class="b" style="left:297px;top:585px;width:1561px;height:1px;background:#dcdcdc"></div>
<span class="t" style="left:309.6px;top:554.3px;font-size:15px;color:#474747;transform:scaleX(0.980);">6</span>
<span class="t" style="left:334.9px;top:554.3px;font-size:15px;color:#474747;">Kofi Bonsu</span>
<span class="t" style="left:517.4px;top:554.3px;font-size:15px;color:#474747;transform:scaleX(0.991);">P1-1004</span>
<span class="t" style="left:638.4px;top:554.3px;font-size:15px;color:#474747;transform:scaleX(0.980);">5</span>
<div class="b cb" style="left:710px;top:551px"></div>
<div class="b inp" style="left:766px;top:546px;width:109px"></div>
<span class="t ns" style="left:773.1px;top:555.8px;font-size:13px;color:#4b5157;">0.00</span>
<div class="b inp" style="left:887px;top:546px;width:109px"></div>
<span class="t ns" style="left:894.1px;top:555.8px;font-size:13px;color:#4b5157;">0.00</span>
<div class="b inp" style="left:1008px;top:546px;width:109px"></div>
<span class="t ns" style="left:1015.1px;top:555.8px;font-size:13px;color:#4b5157;">0.00</span>
<div class="b inp" style="left:1129px;top:546px;width:110px"></div>
<span class="t ns" style="left:1136.1px;top:555.8px;font-size:13px;color:#4b5157;">0.00</span>
<div class="b inp" style="left:1251px;top:546px;width:109px"></div>
<span class="t ns" style="left:1258.1px;top:555.8px;font-size:13px;color:#4b5157;">0.00</span>
<div class="b inp" style="left:1462px;top:546px;width:110px"></div>
<span class="t ns" style="left:1469.3px;top:555.8px;font-size:13px;color:#4b5157;">40</span>
<div class="b inp" style="left:1584px;top:546px;width:109px"></div>
<span class="t ns" style="left:1590.7px;top:555.8px;font-size:13px;color:#4b5157;">14</span>
<div class="b" style="left:1386px;top:561.8px;width:5px;height:2px;border-radius:.5px;background:#155724"></div>
<div class="b" style="left:1431px;top:561.8px;width:5px;height:2px;border-radius:.5px;background:#155724"></div>
<span class="t ns" style="left:1706.6px;top:553.2px;font-size:16px;font-weight:700;color:#856404;transform:scaleX(0.965);">54.0</span>
<span class="t ns" style="left:1751.5px;top:553.2px;font-size:16px;font-weight:700;color:#856404;transform:scaleX(0.965);">27.0</span>
<span class="t" style="left:1807.1px;top:553.5px;font-size:17.5px;font-weight:700;color:#28a745;transform:scaleX(0.970);">27.0</span>
<div class="b" style="left:760px;top:586px;width:605px;height:45px;background:#f0fdf3"></div>
<div class="b" style="left:1366px;top:586px;width:45px;height:45px;background:linear-gradient(135deg,#d4edda,#c3e6cb)"></div>
<div class="b" style="left:1412px;top:586px;width:44px;height:45px;background:linear-gradient(135deg,#c3efcb,#a7e5b2)"></div>
<div class="b" style="left:1457px;top:586px;width:241px;height:45px;background:#fffbf0"></div>
<div class="b" style="left:1699px;top:586px;width:45px;height:45px;background:linear-gradient(135deg,#fff3cd,#ffeaa7)"></div>
<div class="b" style="left:1745px;top:586px;width:44px;height:45px;background:linear-gradient(135deg,#ffe6a0,#fdce75)"></div>
<div class="b" style="left:1790px;top:586px;width:66px;height:45px;background:#f0f8ff"></div>
<div class="b" style="left:297px;top:631px;width:1561px;height:1px;background:#dcdcdc"></div>
<span class="t" style="left:309.6px;top:600.3px;font-size:15px;color:#474747;transform:scaleX(0.980);">7</span>
<span class="t" style="left:336.1px;top:600.3px;font-size:15px;color:#474747;transform:scaleX(0.989);">Adoma Appiah</span>
<span class="t" style="left:517.4px;top:600.3px;font-size:15px;color:#474747;transform:scaleX(0.994);">P1-1005</span>
<span class="t" style="left:638.3px;top:600.3px;font-size:15px;color:#474747;transform:scaleX(0.980);">6</span>
<div class="b cb" style="left:710px;top:597px"></div>
<div class="b inp" style="left:766px;top:592px;width:109px"></div>
<span class="t ns" style="left:773.1px;top:601.8px;font-size:13px;color:#4b5157;">0.00</span>
<div class="b inp" style="left:887px;top:592px;width:109px"></div>
<span class="t ns" style="left:894.1px;top:601.8px;font-size:13px;color:#4b5157;">0.00</span>
<div class="b inp" style="left:1008px;top:592px;width:109px"></div>
<span class="t ns" style="left:1015.1px;top:601.8px;font-size:13px;color:#4b5157;">0.00</span>
<div class="b inp" style="left:1129px;top:592px;width:110px"></div>
<span class="t ns" style="left:1136.1px;top:601.8px;font-size:13px;color:#4b5157;">0.00</span>
<div class="b inp" style="left:1251px;top:592px;width:109px"></div>
<span class="t ns" style="left:1258.1px;top:601.8px;font-size:13px;color:#4b5157;">0.00</span>
<div class="b inp" style="left:1462px;top:592px;width:110px"></div>
<span class="t ns" style="left:1469.1px;top:601.8px;font-size:13px;color:#4b5157;">55</span>
<div class="b inp" style="left:1584px;top:592px;width:109px"></div>
<span class="t ns" style="left:1591.2px;top:601.8px;font-size:13px;color:#4b5157;">30</span>
<div class="b" style="left:1386px;top:607.8px;width:5px;height:2px;border-radius:.5px;background:#155724"></div>
<div class="b" style="left:1431px;top:607.8px;width:5px;height:2px;border-radius:.5px;background:#155724"></div>
<span class="t ns" style="left:1706.5px;top:599.2px;font-size:16px;font-weight:700;color:#856404;transform:scaleX(0.965);">85.0</span>
<span class="t ns" style="left:1751.6px;top:599.2px;font-size:16px;font-weight:700;color:#856404;transform:scaleX(0.965);">42.5</span>
<span class="t" style="left:1807.2px;top:599.5px;font-size:17.5px;font-weight:700;color:#28a745;transform:scaleX(0.970);">42.5</span>
<div class="b" style="left:760px;top:632px;width:605px;height:45px;background:#f0fdf3"></div>
<div class="b" style="left:1366px;top:632px;width:45px;height:45px;background:linear-gradient(135deg,#d4edda,#c3e6cb)"></div>
<div class="b" style="left:1412px;top:632px;width:44px;height:45px;background:linear-gradient(135deg,#c3efcb,#a7e5b2)"></div>
<div class="b" style="left:1457px;top:632px;width:241px;height:45px;background:#fffbf0"></div>
<div class="b" style="left:1699px;top:632px;width:45px;height:45px;background:linear-gradient(135deg,#fff3cd,#ffeaa7)"></div>
<div class="b" style="left:1745px;top:632px;width:44px;height:45px;background:linear-gradient(135deg,#ffe6a0,#fdce75)"></div>
<div class="b" style="left:1790px;top:632px;width:66px;height:45px;background:#f0f8ff"></div>
<div class="b" style="left:297px;top:310px;width:1px;height:324px;background:#dcdcdc"></div>
<div class="b" style="left:329px;top:310px;width:1px;height:324px;background:#dcdcdc"></div>
<div class="b" style="left:511px;top:310px;width:1px;height:324px;background:#dcdcdc"></div>
<div class="b" style="left:632px;top:310px;width:1px;height:324px;background:#dcdcdc"></div>
<div class="b" style="left:686px;top:310px;width:1px;height:324px;background:#dcdcdc"></div>
<div class="b" style="left:759px;top:310px;width:1px;height:324px;background:#dcdcdc"></div>
<div class="b" style="left:880px;top:310px;width:1px;height:324px;background:#dcdcdc"></div>
<div class="b" style="left:1002px;top:310px;width:1px;height:324px;background:#dcdcdc"></div>
<div class="b" style="left:1123px;top:310px;width:1px;height:324px;background:#dcdcdc"></div>
<div class="b" style="left:1244px;top:310px;width:1px;height:324px;background:#dcdcdc"></div>
<div class="b" style="left:1365px;top:310px;width:1px;height:324px;background:#dcdcdc"></div>
<div class="b" style="left:1411px;top:310px;width:1px;height:324px;background:#dcdcdc"></div>
<div class="b" style="left:1456px;top:310px;width:1px;height:324px;background:#dcdcdc"></div>
<div class="b" style="left:1577px;top:310px;width:1px;height:324px;background:#dcdcdc"></div>
<div class="b" style="left:1698px;top:310px;width:1px;height:324px;background:#dcdcdc"></div>
<div class="b" style="left:1744px;top:310px;width:1px;height:324px;background:#dcdcdc"></div>
<div class="b" style="left:1789px;top:310px;width:1px;height:324px;background:#dcdcdc"></div>
<div class="b" style="left:1856px;top:310px;width:1px;height:324px;background:#dcdcdc"></div>
<div class="abs" style="left:259px;top:0;width:1599px;height:57px;background:linear-gradient(#e4e4e4 1px,#fff 13px)"></div>
<div class="abs" style="left:259px;top:57px;width:1599px;height:10px;background:linear-gradient(rgba(200,200,200,.52),rgba(200,200,200,.4) 40%,rgba(200,200,200,0))"></div>
<div class="abs" style="left:0;top:0;width:1858px;height:1px;background:linear-gradient(90deg,#0b4716 259px,#003c00 259px)"></div>
<div class="abs" style="left:270px;top:13px;width:32px;height:31px;background:#fff;border:1px solid #fbb53a;border-radius:3px;box-shadow:1px 2px 5px rgba(0,0,0,.18)"></div>
<svg class="abs" style="left:275px;top:18px;width:22px;height:19px" viewBox="0 0 22 19"><path d="M11 1L1.2 9.8h2.6V18h5.2v-5.2h4V18h5.2V9.8h2.6z" fill="#757575"/></svg>
<span class="t" style="left:311.5px;top:17.5px;font-size:21.7px;color:#333;transform:scaleX(1.008);">Mark Entries</span>
<div class="abs" style="left:1833px;top:-22px;width:54px;height:54px;border-radius:50%;background:#fff;box-shadow:0 2px 6px rgba(0,0,0,.4)"></div>
<div class="abs" style="left:1845px;top:-5px;width:20px;height:29px;border:2px solid #111;background:#fff"></div>
<svg class="abs" style="left:1850px;top:4px;width:9px;height:14px" viewBox="0 0 9 14"><path d="M1 1c4 1 6 4 5.5 9" fill="none" stroke="#1e90ff" stroke-width="2.2"/><path d="M3 8.5l3.5 4.5 2.5-5z" fill="#1e90ff"/></svg>
</div>
</body></html>
